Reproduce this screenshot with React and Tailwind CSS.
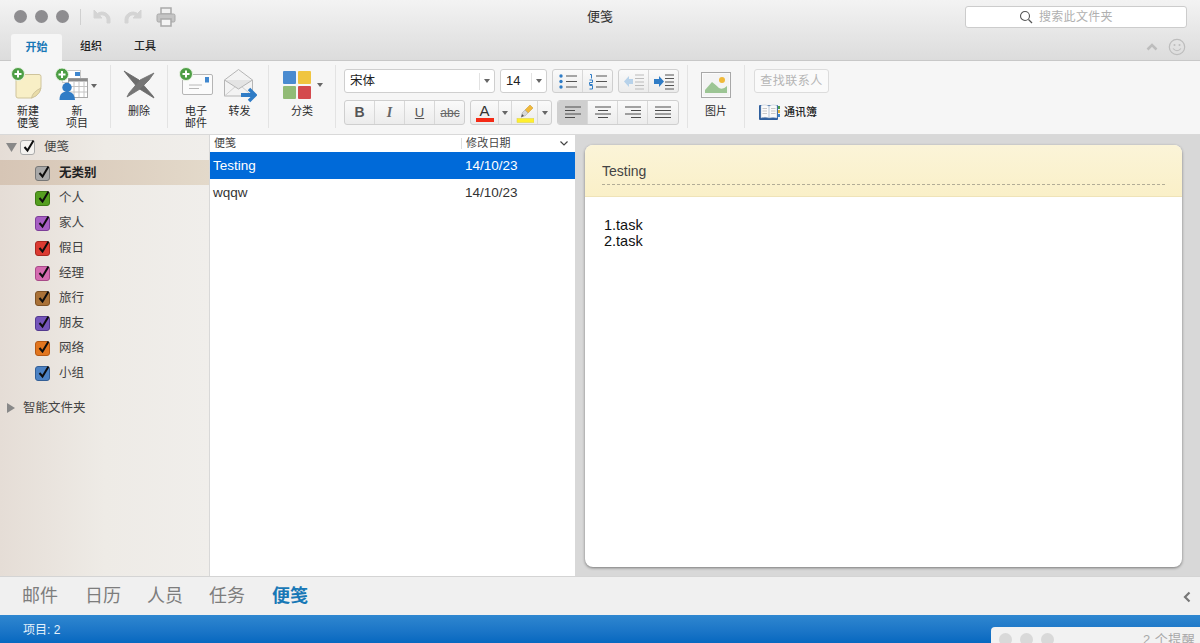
const FONT = '"Liberation Sans","Noto Sans CJK SC",sans-serif';

const Plus = ({ x, y }) => (
  <g>
    <circle cx={x} cy={y} r="6.5" fill="#4d9e45" stroke="#e9f2e4" strokeWidth="1" />
    <path d={`M${x - 3.5} ${y}h7M${x} ${y - 3.5}v7`} stroke="#fff" strokeWidth="2" />
  </g>
);

const NoteIcon = () => (
  <svg width="36" height="36" viewBox="0 0 36 36">
    <path d="M6 8.500h23a2 2 0 0 1 2 2V21q0 5-5 8l-4 3H8a2 2 0 0 1-2-2z" fill="#f8efc6" stroke="#cfc49c" />
    <path d="M21.500 32q1-6 9.500-10q-1 5-5 8z" fill="#e9dca8" stroke="#cfc49c" />
    <Plus x="8" y="8" />
  </svg>
);

const NewItemIcon = () => (
  <svg width="34" height="34" viewBox="0 0 34 34">
    <rect x="7.500" y="2.500" width="18" height="12" fill="#fff" stroke="#c8c8c8" />
    <rect x="20" y="4" width="5" height="4" fill="#3f87cf" />
    <rect x="13.500" y="10.500" width="19" height="19" fill="#fff" stroke="#a9a9a9" />
    <rect x="13.500" y="10.500" width="19" height="3" fill="#8b8b8b" />
    <path d="M14 18.500h18M14 24h18M19 14v15M24 14v15M29 14v15" stroke="#c4c4c4" />
    <circle cx="12" cy="19.500" r="4.700" fill="#2f7cc6" />
    <path d="M4.500 32q0-7 4.500-8h6q4.500 1 5 8z" fill="#2f7cc6" />
    <Plus x="7" y="6.500" />
  </svg>
);

const DeleteIcon = () => (
  <svg width="34" height="30" viewBox="0 0 34 30">
    <path d="M1 1L16 10L30 26L31 28L15 18L5 6Z" fill="#6d6d6d" stroke="#666" strokeWidth=".8" strokeLinejoin="round" />
    <path d="M31 3L17 10L6 23L4 27L17 19L26 10Z" fill="#767676" stroke="#707070" strokeWidth=".8" strokeLinejoin="round" />
  </svg>
);

const MailIcon = () => (
  <svg width="36" height="32" viewBox="0 0 36 32">
    <rect x="4.500" y="7.500" width="30" height="20" rx="1.500" fill="#fbfbfb" stroke="#b5b5b5" />
    <rect x="27" y="10" width="4" height="5.500" fill="#3f87cf" />
    <path d="M11 18h13M11 21.500h10" stroke="#b8b8b8" />
    <Plus x="8" y="7" />
  </svg>
);

const ForwardIcon = () => (
  <svg width="33" height="34" viewBox="0 0 33 34">
    <path d="M.5 11L14.500 .5L28.500 11V27H.5Z" fill="#f3f3f3" stroke="#b5b5b5" />
    <path d="M.5 11L14.500 20L28.500 11" fill="#e4e4e4" stroke="#b5b5b5" />
    <path d="M.5 27L12 17M28.500 27L17 17" stroke="#cfcfcf" />
    <path d="M17 26H30" stroke="#2f7cc6" strokeWidth="4" />
    <path d="M25 20L31 26L25 32" fill="none" stroke="#2f7cc6" strokeWidth="3.500" />
  </svg>
);

const CategoryIcon = () => (
  <div className="grid grid-cols-2 gap-[2px] w-[28px] mt-[5px]">
    <div className="h-[13px] rounded-[1px] bg-[#4a8bd0]" />
    <div className="h-[13px] rounded-[1px] bg-[#f0c53f]" />
    <div className="h-[13px] rounded-[1px] bg-[#92bb76]" />
    <div className="h-[13px] rounded-[1px] bg-[#d44a4e]" />
  </div>
);

const Caret = ({ className = "" }) => (
  <svg width="6" height="4" viewBox="0 0 6 4" className={className}>
    <path d="M0 0h6L3 4z" fill="#666" />
  </svg>
);

const Sep = () => <div className="w-px h-[63px] bg-[#e3e3e3] self-start mt-[4px]" />;

const Label = ({ children, className = "" }) => (
  <div className={"text-[11px] leading-[12px] text-[#2b2b2b] text-center " + className}>{children}</div>
);

const Seg = ({ children, className = "" }) => (
  <div className={"flex rounded-[3px] border border-[#cfcfcf] bg-gradient-to-b from-[#fafafa] to-[#ececec] overflow-hidden " + className}>
    {children}
  </div>
);

const Cell = ({ children, w = "w-[30px]", active }) => (
  <div className={"flex items-center justify-center border-r last:border-r-0 border-[#d8d8d8] shrink-0 " + w + (active ? " bg-[#cfcfcf]" : "")}>
    {children}
  </div>
);

const Lines = ({ kind }) => {
  const rows = {
    left: ["M3 3h16", "M3 6.500h10", "M3 10h16", "M3 13.500h10"],
    center: ["M3 3h16", "M6 6.500h10", "M3 10h16", "M6 13.500h10"],
    right: ["M3 3h16", "M9 6.500h10", "M3 10h16", "M9 13.500h10"],
    justify: ["M3 3h16", "M3 6.500h16", "M3 10h16", "M3 13.500h16"],
  }[kind];
  return (
    <svg width="22" height="17" viewBox="0 0 22 17">
      <path d={rows.join("")} stroke="#4c4c4c" strokeWidth="1.200" />
    </svg>
  );
};

const Bullets = () => (
  <svg width="20" height="17" viewBox="0 0 20 17">
    <circle cx="3" cy="3" r="1.700" fill="#2f7cc6" />
    <circle cx="3" cy="8.500" r="1.700" fill="#2f7cc6" />
    <circle cx="3" cy="14" r="1.700" fill="#2f7cc6" />
    <path d="M8 3h11M8 8.500h11M8 14h11" stroke="#555" strokeWidth="1.200" />
  </svg>
);

const Numbers = () => (
  <svg width="20" height="17" viewBox="0 0 20 17">
    <path d="M2 1.500h1.500v4M1.500 7h3v2.500h-3v2h3M1.500 12.500h3v3.500h-3" fill="none" stroke="#2f7cc6" strokeWidth="1" />
    <path d="M8 3h11M8 8.500h11M8 14h11" stroke="#555" strokeWidth="1.200" />
  </svg>
);

const Indent = ({ dir }) => {
  const on = dir === "in";
  return (
    <svg width="22" height="17" viewBox="0 0 22 17">
      <path
        d={on ? "M1 6h5V3l5 5.500-5 5.500v-3H1z" : "M10 6H6V3L1 8.500 6 14v-3h4z"}
        fill={on ? "#2f7cc6" : "#b7d2ea"}
      />
      <path d="M12 2h9M12 5.500h9M12 9h9M12 12.500h9M12 16h9" stroke={on ? "#555" : "#bcbcbc"} strokeWidth="1.100" />
    </svg>
  );
};

const Highlighter = () => (
  <svg width="18" height="20" viewBox="0 0 18 20">
    <path d="M9 7l5-5 3 3-5 5z" fill="#f0b93a" stroke="#c99520" strokeWidth=".5" />
    <path d="M9 7l3 3-3 3H6V10z" fill="#d7d7d7" stroke="#a0a0a0" strokeWidth=".5" />
    <path d="M6 11l2 2-3 1.500z" fill="#555" />
    <rect x="1" y="15.500" width="17" height="4" fill="#ffef2e" stroke="#d9cf45" strokeWidth=".5" />
  </svg>
);

const PictureIcon = () => (
  <svg width="30" height="26" viewBox="0 0 30 26">
    <rect x=".5" y=".5" width="29" height="25" fill="#fbfbfb" stroke="#a8a8a8" />
    <rect x="2" y="2" width="26" height="22" fill="#f4f4f4" />
    <circle cx="21" cy="8" r="3" fill="#f0b93a" />
    <path d="M4 21V18L11 10Q15 13 18 16Q22 18 26 14V21z" fill="#9cc594" />
  </svg>
);

const BookIcon = () => (
  <svg width="21" height="16" viewBox="0 0 21 16">
    <rect x="0" y="1" width="19" height="15" rx="1" fill="#2f5f9e" />
    <path d="M2 1.500q4-1.500 8 .5v12q-4-1.500-8 0zM10 2q4-2 8-.5V14q-4-1-8 0z" fill="#fafafa" stroke="#9db0c8" strokeWidth=".4" />
    <path d="M3.500 4.500h4.500M3.500 7h4.500M3.500 9.500h4.500M12 4.500h4.500M12 7h4.500M12 9.500h4.500" stroke="#bbb" strokeWidth=".8" />
    <rect x="19" y="2" width="2" height="3" fill="#4b9e4b" />
    <rect x="19" y="6" width="2" height="3" fill="#e0b23a" />
    <rect x="19" y="10" width="2" height="3" fill="#3f87cf" />
  </svg>
);

const Ribbon = () => (
  <div className="flex h-[74px] bg-[#f6f6f6] border-b border-[#d9d9d9]">
    <div className="w-[110px] flex pt-[5px] shrink-0">
      <div className="w-[55px] flex flex-col items-center pl-[1px]">
        <div className="h-[39px] ml-[-1px]"><NoteIcon /></div>
        <Label>新建<br />便笺</Label>
      </div>
      <div className="w-[44px] flex flex-col items-center">
        <div className="h-[39px] self-start mt-[2px] mb-[-2px]"><NewItemIcon /></div>
        <Label>新<br />项目</Label>
      </div>
      <Caret className="mt-[18px] ml-[-8px]" />
    </div>
    <Sep />
    <div className="w-[56px] flex flex-col items-center pt-[9px] shrink-0">
      <div className="h-[34px] ml-[2px]"><DeleteIcon /></div>
      <Label className="mt-[1px]">删除</Label>
    </div>
    <Sep />
    <div className="w-[100px] flex pt-[6px] pl-[8px] shrink-0">
      <div className="w-[40px] flex flex-col items-center">
        <div className="h-[38px]"><MailIcon /></div>
        <Label>电子<br />邮件</Label>
      </div>
      <div className="w-[36px] flex flex-col items-center ml-[5px]">
        <div className="h-[38px] mt-[2px] ml-[3px] mb-[-3px]"><ForwardIcon /></div>
        <Label className="mt-[1px] ml-[1px]">转发</Label>
      </div>
    </div>
    <Sep />
    <div className="w-[66px] flex shrink-0 pl-[14px] pt-[6px]">
      <div className="flex flex-col items-center w-[28px]">
        <div className="h-[38px] mt-[-1px] mb-[1px]"><CategoryIcon /></div>
        <Label className="whitespace-nowrap ml-[10px]">分类</Label>
      </div>
      <Caret className="mt-[16px] ml-[6px]" />
    </div>
    <Sep />
    <div className="w-[351px] pl-[8px] pt-[8px] flex flex-col gap-[7px] shrink-0">
      <div className="flex h-[24px] gap-[5px]">
        <div className="w-[151px] h-[24px] flex items-center rounded-[3px] border border-[#cfcfcf] bg-white text-[12.500px] text-[#222] pl-[5px]">
          <span className="flex-1">宋体</span>
          <span className="w-[15px] h-[17px] border-l border-[#e2e2e2] flex items-center justify-center"><Caret /></span>
        </div>
        <div className="w-[47px] h-[24px] flex items-center rounded-[3px] border border-[#cfcfcf] bg-white text-[13px] text-[#222] pl-[5px]">
          <span className="flex-1">14</span>
          <span className="w-[15px] h-[17px] border-l border-[#e2e2e2] flex items-center justify-center"><Caret /></span>
        </div>
        <Seg className="w-[61px] h-[24px]">
          <Cell><Bullets /></Cell>
          <Cell><Numbers /></Cell>
        </Seg>
        <Seg className="w-[61px] h-[24px]">
          <Cell><Indent dir="out" /></Cell>
          <Cell><Indent dir="in" /></Cell>
        </Seg>
      </div>
      <div className="flex h-[25px]">
        <Seg className="w-[121px] h-[25px]">
          <Cell><span className="font-bold text-[14px] text-[#555]">B</span></Cell>
          <Cell><span className="italic font-bold text-[14px] text-[#666] font-['Liberation_Serif']">I</span></Cell>
          <Cell><span className="underline text-[13px] text-[#555]">U</span></Cell>
          <Cell><span className="line-through text-[12px] text-[#666]">abc</span></Cell>
        </Seg>
        <Seg className="w-[82px] h-[25px] ml-[5px]">
          <Cell w="w-[28px]">
            <div className="flex flex-col items-center">
              <span className="text-[15px] leading-[15px] text-[#333]">A</span>
              <span className="w-[18px] h-[4px] bg-[#f42a16]" />
            </div>
          </Cell>
          <Cell w="w-[13px]"><Caret /></Cell>
          <Cell w="w-[26px]"><Highlighter /></Cell>
          <Cell w="w-[13px]"><Caret /></Cell>
        </Seg>
        <Seg className="w-[122px] h-[25px] ml-[5px]">
          <Cell active><Lines kind="left" /></Cell>
          <Cell><Lines kind="center" /></Cell>
          <Cell><Lines kind="right" /></Cell>
          <Cell><Lines kind="justify" /></Cell>
        </Seg>
      </div>
    </div>
    <Sep />
    <div className="w-[56px] flex flex-col items-center pt-[11px] shrink-0">
      <div className="h-[33px]"><PictureIcon /></div>
      <Label>图片</Label>
    </div>
    <Sep />
    <div className="pl-[9px] pt-[8px] flex flex-col">
      <div className="w-[75px] h-[24px] rounded-[3px] border border-[#dcdcdc] bg-[#fafafa] text-[12px] text-[#b5b5b5] flex items-center justify-center tracking-[0.5px]">查找联系人</div>
      <div className="flex items-center mt-[11px] ml-[5px] gap-[4px] text-[11px] text-[#222] font-medium">
        <BookIcon />
        <span>通讯簿</span>
      </div>
    </div>
  </div>
);

const Check = () => (
  <svg width="14" height="14" viewBox="0 0 14 14" className="absolute left-[1px] top-[-2px]">
    <path d="M2.500 8L5.500 11.500L11.500 1.500" fill="none" stroke="#0d0d0d" strokeWidth="2" />
  </svg>
);

const Box = ({ color, border }) => (
  <span className="relative block w-[15px] h-[15px] rounded-[3px] border shrink-0" style={{ backgroundColor: color, borderColor: border }}>
    <Check />
  </span>
);

const cats = [
  ["无类别", "#a9a9a9", "#777"],
  ["个人", "#559f20", "#3d7a14"],
  ["家人", "#a75fc4", "#7d3f99"],
  ["假日", "#dc3b32", "#a82820"],
  ["经理", "#d56bb0", "#a84a88"],
  ["旅行", "#aa7238", "#7f5225"],
  ["朋友", "#7555bb", "#533a8f"],
  ["网络", "#e2761f", "#b55814"],
  ["小组", "#4c82c4", "#345f96"],
];

const Sidebar = () => (
  <div className="w-[210px] shrink-0 border-r border-[#d8d8d8] bg-gradient-to-r from-[#e5ddd6] via-[#eeebe6] to-[#f0eeeb] text-[12.500px] text-[#444]">
    <div className="h-[25px] flex items-center">
      <svg width="11" height="9" viewBox="0 0 11 9" className="ml-[6px]"><path d="M0 0h11L5.500 9z" fill="#888" /></svg>
      <span className="relative block w-[15px] h-[15px] rounded-[3px] border border-[#aaa] bg-[#f5f3f0] ml-[3px]"><Check /></span>
      <span className="ml-[9px]">便笺</span>
    </div>
    {cats.map(([name, c, b], i) => (
      <div key={name} className={"h-[25px] flex items-center pl-[35px] gap-[9px] pt-[1px] " + (i === 0 ? "bg-gradient-to-r from-[#d6c5b5] to-[#e3d9ca] font-bold text-[#222]" : "")}>
        <Box color={c} border={b} />
        <span>{name}</span>
      </div>
    ))}
    <div className="h-[25px] mt-[10px] flex items-center pt-[1px]">
      <svg width="8" height="10" viewBox="0 0 8 10" className="ml-[7px]"><path d="M0 0l8 5-8 5z" fill="#888" /></svg>
      <span className="ml-[8px]">智能文件夹</span>
    </div>
  </div>
);

const List = () => (
  <div className="w-[365px] shrink-0 bg-white">
    <div className="h-[17px] flex items-center text-[11px] text-[#444] relative">
      <span className="w-[251px] pl-[4px]">便笺</span>
      <span className="border-l border-[#ddd] pl-[4px] leading-[11px] tracking-[0.2px]">修改日期</span>
      <svg width="8" height="5" viewBox="0 0 8 5" className="ml-auto mr-[7px]"><path d="M.5.500L4 4 7.500.500" fill="none" stroke="#444" strokeWidth="1.200" /></svg>
    </div>
    <div className="h-[27px] flex items-center bg-[#006ad9] text-white text-[13.500px] pl-[3px] pt-[1px]">
      <span className="w-[252px]">Testing</span>
      <span>14/10/23</span>
    </div>
    <div className="h-[27px] flex items-center text-[#333] text-[13.500px] pl-[3px] pt-[1px]">
      <span className="w-[252px]">wqqw</span>
      <span>14/10/23</span>
    </div>
  </div>
);

const Preview = () => (
  <div className="flex-1 bg-[#d8d8d8] pl-[10px] pr-[18px] pt-[10px] pb-[9px] flex">
    <div className="flex-1 rounded-[8px] bg-white shadow-[0_1px_3px_rgba(0,0,0,0.45)] overflow-hidden">
      <div className="h-[52px] bg-gradient-to-b from-[#fbf4d8] to-[#faf0c8] border-b border-[#efe3b8] px-[17px] pt-[16px]">
        <div className="h-[24px] border-b border-dashed border-[#b3ad96] text-[14px] leading-[21px] text-[#444]">Testing</div>
      </div>
      <div className="pl-[19px] pt-[20px] text-[14.500px] leading-[16px] text-[#111]">
        <div>1.task</div>
        <div>2.task</div>
      </div>
    </div>
  </div>
);

export default function App() {
  return (
    <div className="relative w-[1200px] h-[643px] overflow-hidden bg-white flex flex-col" style={{ fontFamily: FONT }}>
      <div className="h-[61px] shrink-0 bg-gradient-to-b from-[#f3f3f3] to-[#dcdcdc] border-b border-[#c8c8c8] flex flex-col">
        <div className="h-[33px] grid grid-cols-[1fr_auto_1fr] items-center">
          <div className="flex items-center pl-[14px]">
            <span className="w-[13px] h-[13px] rounded-full bg-[#8e8d90]" />
            <span className="w-[13px] h-[13px] rounded-full bg-[#8e8d90] ml-[8px]" />
            <span className="w-[13px] h-[13px] rounded-full bg-[#8e8d90] ml-[8px]" />
            <span className="w-px h-[16px] bg-[#d0d0d0] ml-[11px]" />
            <svg width="18" height="15" viewBox="0 0 18 15" className="ml-[12px]"><path d="M1 1v8h8L6.500 6.500A5 5 0 0 1 14 10v4h3v-4A8 8 0 0 0 4.500 4.500z" fill="#d4d4d4" stroke="#d4d4d4" /></svg>
            <svg width="18" height="15" viewBox="0 0 18 15" className="ml-[13px]"><path d="M17 1v8H9l2.500-2.500A5 5 0 0 0 4 10v4H1v-4A8 8 0 0 1 13.500 4.500z" fill="#d4d4d4" stroke="#d4d4d4" /></svg>
            <svg width="20" height="20" viewBox="0 0 20 20" className="ml-[14px]">
              <rect x="5" y="1" width="10" height="6" fill="#f0f0f0" stroke="#a9a9a9" strokeWidth="1.500" />
              <rect x="1" y="7" width="18" height="8" rx="1.500" fill="#c4c4c4" stroke="#a9a9a9" />
              <rect x="5" y="12" width="10" height="7" fill="#f4f4f4" stroke="#a9a9a9" strokeWidth="1.500" />
            </svg>
          </div>
          <div className="text-[13px] text-[#333]">便笺</div>
          <div className="flex justify-end pr-[13px]">
            <div className="w-[222px] h-[22px] rounded-[3px] bg-white border border-[#cccccc] flex items-center pl-[53px] gap-[6px] text-[12px] text-[#b0b0b0]">
              <svg width="14" height="14" viewBox="0 0 14 14"><circle cx="6" cy="6" r="4.500" fill="none" stroke="#555" strokeWidth="1.100" /><path d="M9.500 9.500L13 13" stroke="#555" strokeWidth="1.300" /></svg>
              <span className="tracking-[0.3px]">搜索此文件夹</span>
            </div>
          </div>
        </div>
        <div className="flex-1 flex items-end pl-[11px] text-[11px] text-[#222] font-medium">
          <div className="w-[51px] h-[27px] mb-[-1px] rounded-t-[3px] bg-[#f6f6f6] text-[#1878b6] font-bold flex items-center justify-center">开始</div>
          <div className="w-[58px] h-[27px] flex items-center justify-center">组织</div>
          <div className="w-[50px] h-[27px] flex items-center justify-center">工具</div>
          <svg width="12" height="8" viewBox="0 0 12 8" className="ml-auto mb-[9px]"><path d="M1.500 6.500L6 2l4.500 4.500" fill="none" stroke="#bdbdbd" strokeWidth="2.500" /></svg>
          <svg width="18" height="18" viewBox="0 0 18 18" className="ml-[10px] mr-[14px] mb-[4px]">
            <circle cx="9" cy="9" r="7.700" fill="none" stroke="#bdbdbd" strokeWidth="1.200" />
            <circle cx="6.500" cy="7" r="1" fill="#bdbdbd" />
            <circle cx="11.500" cy="7" r="1" fill="#bdbdbd" />
            <path d="M5 10.500q4 4.500 8 0" fill="none" stroke="#bdbdbd" strokeWidth="1.100" />
          </svg>
        </div>
      </div>
      <Ribbon />
      <div className="flex-1 flex min-h-0 border-b border-[#d4d4d4]">
        <Sidebar />
        <List />
        <Preview />
      </div>
      <div className="h-[38px] shrink-0 bg-[#f0f0f0] flex items-center pl-[22px] pt-[1px] text-[18px] text-[#7d7d7d]">
        <span>邮件</span>
        <span className="ml-[27px]">日历</span>
        <span className="ml-[26px]">人员</span>
        <span className="ml-[26px]">任务</span>
        <span className="ml-[27px] text-[#1878b6] font-bold">便笺</span>
        <svg width="8" height="12" viewBox="0 0 8 12" className="ml-auto mr-[9px]"><path d="M6.500 1.500L2 6l4.500 4.500" fill="none" stroke="#777" strokeWidth="2.200" /></svg>
      </div>
      <div className="h-[28px] shrink-0 bg-gradient-to-b from-[#2f87d0] to-[#0568c0] flex items-center pl-[23px] pt-[1px] text-[12px] text-[#e6f1fa]">项目: 2</div>
      <div className="absolute left-[991px] top-[627px] w-[209px] h-[16px] rounded-tl-[4px] bg-[#f2f2f2] flex items-start pl-[8px] pt-[6px] gap-[8px]">
        <span className="w-[13px] h-[13px] rounded-full bg-[#d9d9d9]" />
        <span className="w-[13px] h-[13px] rounded-full bg-[#d9d9d9]" />
        <span className="w-[13px] h-[13px] rounded-full bg-[#d9d9d9]" />
        <span className="ml-[81px] text-[13px] leading-[13px] text-[#a8a8a8] tracking-[0.5px] whitespace-nowrap">2 个提醒</span>
      </div>
    </div>
  );
}
